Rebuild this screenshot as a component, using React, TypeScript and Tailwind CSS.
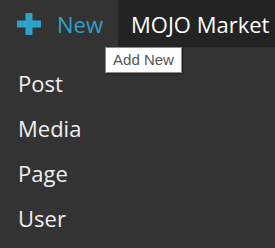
const items = ['Post', 'Media', 'Page', 'User'];

export default function App() {
  return (
    <div
      className="relative h-[248px] w-[275px] overflow-hidden bg-[#333333] text-[22px]"
      style={{ fontFamily: '"Open Sans", sans-serif' }}
    >
      {/* Top bar */}
      <div className="flex h-[47px]">
        <div className="flex w-[118px] items-center bg-[#333333] pl-[17px] text-[#2ea2cc]">
          <svg width="24" height="22" viewBox="0 0 24 22" className="shrink-0">
            <rect x="0" y="7.5" width="24" height="7" fill="#2ea2cc" />
            <rect x="8.5" y="0" width="7" height="22" fill="#2ea2cc" />
          </svg>
          <span className="ml-[16px] leading-none">New</span>
        </div>
        <div className="flex flex-1 items-center bg-[#232323] pl-[13px] whitespace-nowrap text-white">
          <span className="leading-none">MOJO Market</span>
        </div>
      </div>

      {/* Submenu */}
      <ul className="flex flex-col pl-[18px] pt-[14px] text-[#eeeeee]">
        {items.map((item) => (
          <li key={item} className="h-[45px] leading-[45px]">
            {item}
          </li>
        ))}
      </ul>

      {/* Tooltip */}
      <div
        className="absolute left-[105px] top-[47px] flex h-[26px] w-[77px] items-center justify-center border border-[#8c8c8c] bg-white text-[15px] text-[#555555] shadow-[1px_1px_2px_rgba(0,0,0,0.4)]"
        style={{ fontFamily: '"Liberation Sans", Arial, sans-serif' }}
      >
        Add New
      </div>
    </div>
  );
}
